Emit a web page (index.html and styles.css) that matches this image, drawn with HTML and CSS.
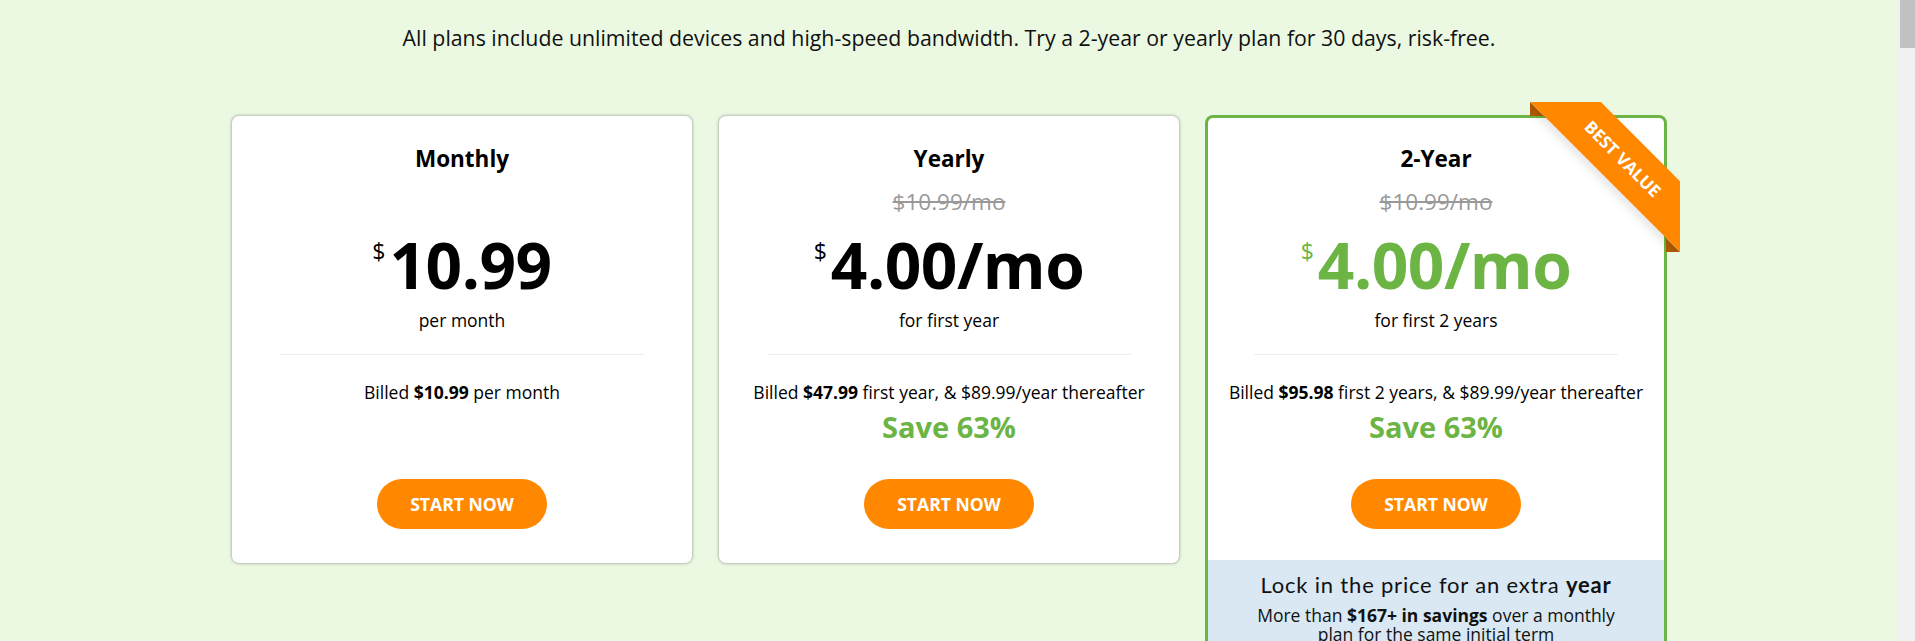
FILE: index.html
```html
<!DOCTYPE html>
<html lang="en">
<head>
<meta charset="utf-8">
<title>Plans</title>
<link rel="stylesheet" href="styles.css">
</head>
<body>
<div class="page">
  <p class="intro">All plans include unlimited devices and high-speed bandwidth. Try a 2-year or yearly plan for 30 days, risk-free.</p>
  <div class="plans">
    <div class="plan">
      <div class="plan-body">
        <h3 class="plan-name">Monthly</h3>
        <div class="old-price"></div>
        <div class="price"><span class="cur">$</span><span class="amt">10.99</span></div>
        <div class="per">per month</div>
        <hr class="divider">
        <p class="billed">Billed <b>$10.99</b> per month</p>
        <p class="save"></p>
        <a class="btn" href="#">START NOW</a>
      </div>
    </div>
    <div class="plan">
      <div class="plan-body">
        <h3 class="plan-name">Yearly</h3>
        <div class="old-price"><s>$10.99/mo</s></div>
        <div class="price"><span class="cur">$</span><span class="amt">4.00/mo</span></div>
        <div class="per">for first year</div>
        <hr class="divider">
        <p class="billed">Billed <b>$47.99</b> first year, &amp; $89.99/year thereafter</p>
        <p class="save">Save 63%</p>
        <a class="btn" href="#">START NOW</a>
      </div>
    </div>
    <div class="plan plan-best">
      <div class="ribbon"><span>Best Value</span></div>
      <div class="plan-body">
        <h3 class="plan-name">2-Year</h3>
        <div class="old-price"><s>$10.99/mo</s></div>
        <div class="price"><span class="cur">$</span><span class="amt">4.00/mo</span></div>
        <div class="per">for first 2 years</div>
        <hr class="divider">
        <p class="billed">Billed <b>$95.98</b> first 2 years, &amp; $89.99/year thereafter</p>
        <p class="save">Save 63%</p>
        <a class="btn" href="#">START NOW</a>
      </div>
      <div class="lock">
        <div class="lock-title">Lock in the price for an extra <b>year</b></div>
        <div class="lock-text">More than <b>$167+ in savings</b> over a monthly plan for the same initial term</div>
      </div>
    </div>
  </div>
</div>
<div class="scrollbar"><div class="scrollbar-thumb"></div></div>
</body>
</html>
```
FILE: styles.css
```css
html, body {
  margin: 0;
  padding: 0;
  background: #ebf9e3;
  overflow: hidden;
}

body {
  font-family: "Open Sans", "Liberation Sans", sans-serif;
  color: #000;
}

.page {
  margin-right: 17px;
  padding-top: 24px;
  padding-bottom: 40px;
}

.scrollbar {
  position: fixed;
  top: 0;
  right: 0;
  width: 17px;
  height: 100vh;
  background: #f1f1f1;
}

.scrollbar-thumb {
  margin-left: 2px;
  height: 48px;
  background: #c1c1c1;
}

.intro {
  margin: 0;
  text-align: center;
  font-size: 21.3px;
  line-height: 28px;
  color: #111;
}

.plans {
  display: grid;
  grid-template-columns: repeat(3, 462px);
  gap: 25px;
  justify-content: center;
  align-items: start;
  margin-top: 63px;
}

.plan {
  position: relative;
  background: #fff;
  border: 1px solid #c6cfbf;
  border-radius: 8px;
  box-shadow: 0 0 3px rgba(0, 0, 0, 0.2);
}

.plan-body {
  padding: 28px 16px 34px;
  text-align: center;
}

.plan-name {
  margin: 0;
  font-size: 22.5px;
  line-height: 30px;
  font-weight: 700;
}

.old-price {
  margin-top: 14px;
  height: 28px;
  font-size: 22.5px;
  line-height: 28px;
  color: #999;
}

.old-price s {
  text-decoration-thickness: 2px;
}

.price {
  margin-top: 17px;
  display: flex;
  justify-content: center;
  align-items: flex-start;
  height: 64px;
}

.cur {
  font-size: 23px;
  line-height: 24px;
  margin-top: 6px;
  margin-right: 4px;
}

.amt {
  font-size: 64px;
  line-height: 64px;
  font-weight: 700;
  letter-spacing: -0.5px;
}

.per {
  margin-top: 11px;
  font-size: 17.5px;
  line-height: 24px;
}

.divider {
  width: 364px;
  margin: 22px auto 0;
  border: 0;
  height: 1px;
  background: #ececec;
}

.billed {
  margin: 25px 0 0;
  font-size: 17.5px;
  line-height: 24px;
}

.save {
  margin: 5px 0 0;
  height: 36px;
  font-size: 29px;
  line-height: 36px;
  font-weight: 700;
  color: #6cb444;
}

.btn {
  display: block;
  width: 170px;
  height: 50px;
  margin: 34px auto 0;
  border-radius: 25px;
  background: #ff8800;
  color: #fff;
  font-size: 17.6px;
  line-height: 50px;
  font-weight: 700;
  text-decoration: none;
}

.plan-best {
  border: 3px solid #6cb444;
  box-shadow: none;
}

.plan-best .plan-body {
  padding-top: 26px;
  padding-bottom: 31px;
}

.plan-best .cur,
.plan-best .amt {
  color: #6cb444;
}

.ribbon {
  position: absolute;
  top: -16px;
  right: -16px;
  width: 150px;
  height: 150px;
  overflow: hidden;
  z-index: 1;
}

.ribbon::before,
.ribbon::after {
  content: "";
  position: absolute;
  z-index: -1;
  border: 7px solid #b35c00;
  border-top-color: transparent;
  border-right-color: transparent;
}

.ribbon::before { top: 0; left: 0; }
.ribbon::after { bottom: 0; right: 0; }

.ribbon span {
  position: absolute;
  left: -20px;
  top: 32px;
  width: 225px;
  height: 50px;
  line-height: 50px;
  background: #ff8800;
  color: #fff;
  text-align: center;
  text-transform: uppercase;
  font-size: 17px;
  font-weight: 700;
  transform: rotate(45deg);
  box-shadow: 0 5px 10px rgba(0, 0, 0, 0.1);
}

.lock {
  background: #d9e8f3;
  padding: 12px 30px 16px;
  text-align: center;
  border-radius: 0 0 5px 5px;
}

.lock-title {
  font-family: "Lato", "Open Sans", sans-serif;
  font-size: 22px;
  line-height: 26px;
  letter-spacing: 0.8px;
  color: #111;
}

.lock-title b { font-weight: 700; }

.lock-text {
  max-width: 375px;
  margin: 8px auto 0;
  font-size: 17.5px;
  line-height: 18.5px;
  color: #111;
}
```
